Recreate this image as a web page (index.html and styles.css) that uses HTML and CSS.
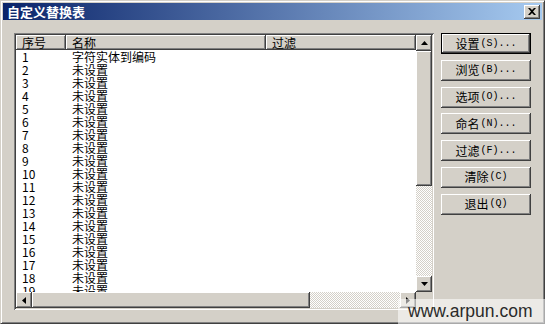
FILE: index.html
```html
<!DOCTYPE html>
<html lang="zh-CN">
<head>
<meta charset="utf-8">
<title>自定义替换表</title>
<link rel="stylesheet" href="styles.css">
</head>
<body>
<div class="window">
  <div class="titlebar">
    <span class="title">自定义替换表</span>
    <span class="close">
      <svg width="8" height="7" viewBox="0 0 8 7"><path d="M0 0h2l2 2 2-2h2L5 3.5 8 7H6L4 5 2 7H0l3-3.5z" fill="#000"/></svg>
    </span>
  </div>
  <div class="content">
    <div class="listbox">
      <div class="list">
        <div class="row head">
          <div class="hcell">序号</div>
          <div class="hcell">名称</div>
          <div class="hcell">过滤</div>
        </div>
        <div class="row"><div class="cell">1</div><div class="cell">字符实体到编码</div><div class="cell"></div></div>
        <div class="row"><div class="cell">2</div><div class="cell">未设置</div><div class="cell"></div></div>
        <div class="row"><div class="cell">3</div><div class="cell">未设置</div><div class="cell"></div></div>
        <div class="row"><div class="cell">4</div><div class="cell">未设置</div><div class="cell"></div></div>
        <div class="row"><div class="cell">5</div><div class="cell">未设置</div><div class="cell"></div></div>
        <div class="row"><div class="cell">6</div><div class="cell">未设置</div><div class="cell"></div></div>
        <div class="row"><div class="cell">7</div><div class="cell">未设置</div><div class="cell"></div></div>
        <div class="row"><div class="cell">8</div><div class="cell">未设置</div><div class="cell"></div></div>
        <div class="row"><div class="cell">9</div><div class="cell">未设置</div><div class="cell"></div></div>
        <div class="row"><div class="cell">10</div><div class="cell">未设置</div><div class="cell"></div></div>
        <div class="row"><div class="cell">11</div><div class="cell">未设置</div><div class="cell"></div></div>
        <div class="row"><div class="cell">12</div><div class="cell">未设置</div><div class="cell"></div></div>
        <div class="row"><div class="cell">13</div><div class="cell">未设置</div><div class="cell"></div></div>
        <div class="row"><div class="cell">14</div><div class="cell">未设置</div><div class="cell"></div></div>
        <div class="row"><div class="cell">15</div><div class="cell">未设置</div><div class="cell"></div></div>
        <div class="row"><div class="cell">16</div><div class="cell">未设置</div><div class="cell"></div></div>
        <div class="row"><div class="cell">17</div><div class="cell">未设置</div><div class="cell"></div></div>
        <div class="row"><div class="cell">18</div><div class="cell">未设置</div><div class="cell"></div></div>
        <div class="row"><div class="cell">19</div><div class="cell">未设置</div><div class="cell"></div></div>
      </div>
      <div class="vscroll">
        <div class="sbtn"><svg width="7" height="4" viewBox="0 0 7 4"><path d="M3.5 0L7 4H0z" fill="#000"/></svg></div>
        <div class="vthumb"></div>
        <div class="track"></div>
        <div class="sbtn"><svg width="7" height="4" viewBox="0 0 7 4"><path d="M0 0h7L3.5 4z" fill="#000"/></svg></div>
      </div>
      <div class="hscroll">
        <div class="sbtn"><svg width="4" height="7" viewBox="0 0 4 7"><path d="M0 3.5L4 0v7z" fill="#000"/></svg></div>
        <div class="hthumb"></div>
        <div class="track"></div>
        <div class="sbtn"><svg width="4" height="7" viewBox="0 0 4 7"><path d="M0 0l4 3.5L0 7z" fill="#000"/></svg></div>
      </div>
      <div class="corner"></div>
    </div>
    <div class="buttons">
      <div class="btn default">设置<span class="ascii">(S)...</span></div>
      <div class="btn">浏览<span class="ascii">(B)...</span></div>
      <div class="btn">选项<span class="ascii">(O)...</span></div>
      <div class="btn">命名<span class="ascii">(N)...</span></div>
      <div class="btn">过滤<span class="ascii">(F)...</span></div>
      <div class="btn">清除<span class="ascii">(C)</span></div>
      <div class="btn">退出<span class="ascii">(Q)</span></div>
    </div>
  </div>
  <div class="watermark">www.arpun.com</div>
</div>
</body>
</html>
```

FILE: styles.css
```css
* { box-sizing: border-box; }
html, body { margin: 0; padding: 0; }
body {
  width: 545px;
  height: 324px;
  overflow: hidden;
  font-family: "Noto Sans CJK SC", "Liberation Sans", sans-serif;
  font-size: 12px;
  color: #000;
}
.window {
  position: relative;
  width: 545px;
  height: 324px;
  background: #d4d0c8;
  border: 1px solid;
  border-color: #d4d0c8 #404040 #404040 #d4d0c8;
  box-shadow: inset 1px 1px #fff, inset -1px -1px #808080;
  padding: 2px;
  display: flex;
  flex-direction: column;
}
.titlebar {
  height: 17px;
  background: linear-gradient(to right, #0a246a, #a6caf0);
  display: flex;
  align-items: center;
  justify-content: space-between;
  padding: 0 2px 0 4px;
}
.title {
  color: #fff;
  font-weight: bold;
  font-size: 13px;
  line-height: 17px;
}
.close {
  width: 16px;
  height: 14px;
  background: #d4d0c8;
  box-shadow: inset -1px -1px #404040, inset 1px 1px #fff, inset -2px -2px #808080;
  display: flex;
  align-items: center;
  justify-content: center;
}
.content {
  display: flex;
  gap: 7px;
  padding: 13px 0 0 11px;
}
.listbox {
  width: 420px;
  height: 277px;
  padding: 2px;
  background: #fff;
  box-shadow: inset 1px 1px #808080, inset -1px -1px #fff, inset 2px 2px #404040, inset -2px -2px #d4d0c8;
  display: grid;
  grid-template-columns: 400px 16px;
  grid-template-rows: 257px 16px;
}
.list {
  overflow: hidden;
  background: #fff;
}
.row {
  display: grid;
  grid-template-columns: 50px 200px 1fr;
  height: 13px;
  line-height: 13px;
}
.row.head {
  height: 15px;
  line-height: 15px;
}
.hcell {
  background: #d4d0c8;
  padding-left: 6px;
  box-shadow: inset -1px -1px #404040, inset 1px 1px #fff, inset -2px -2px #808080;
  white-space: nowrap;
  overflow: hidden;
}
.cell {
  padding-left: 6px;
  white-space: nowrap;
}
.vscroll {
  display: flex;
  flex-direction: column;
}
.hscroll {
  display: flex;
}
.sbtn {
  flex: 0 0 16px;
  width: 16px;
  height: 16px;
  background: #d4d0c8;
  box-shadow: inset -1px -1px #404040, inset 1px 1px #fff, inset -2px -2px #808080;
  display: flex;
  align-items: center;
  justify-content: center;
}
.vthumb {
  flex: 0 0 135px;
  background: #d4d0c8;
  box-shadow: inset -1px -1px #404040, inset 1px 1px #fff, inset -2px -2px #808080;
}
.hthumb {
  flex: 0 0 278px;
  background: #d4d0c8;
  box-shadow: inset -1px -1px #404040, inset 1px 1px #fff, inset -2px -2px #808080;
}
.track {
  flex: 1;
  background-image: conic-gradient(#fff 25%, #d4d0c8 0 50%, #fff 0 75%, #d4d0c8 0);
  background-size: 2px 2px;
}
.corner {
  background: #d4d0c8;
}
.buttons {
  display: flex;
  flex-direction: column;
  gap: 5.8px;
}
.btn {
  width: 90px;
  height: 21px;
  background: #d4d0c8;
  box-shadow: inset -1px -1px #404040, inset 1px 1px #fff, inset -2px -2px #808080;
  display: flex;
  align-items: center;
  justify-content: center;
  line-height: 1;
  white-space: nowrap;
}
.btn.default {
  border: 1px solid #000;
}
.ascii {
  font-family: "Liberation Mono", monospace;
  font-size: 10px;
  margin-left: 1px;
}
.watermark {
  position: absolute;
  left: 397px;
  top: 298px;
  width: 147px;
  height: 25px;
  padding-left: 10px;
  background: rgba(255, 255, 255, 0.55);
  font-family: "Liberation Sans", sans-serif;
  font-size: 17.5px;
  line-height: 25px;
  color: #2a2a2a;
}
```
